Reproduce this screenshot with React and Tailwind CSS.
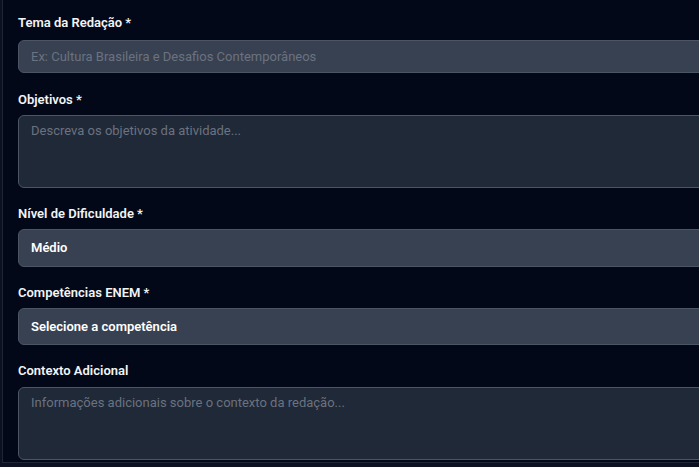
import React from "react";

const font = { fontFamily: "Roboto, 'Liberation Sans', Arial, sans-serif" };

function Label({ children, className = "" }) {
  return (
    <div className={"text-[13px] leading-5 font-semibold text-[#f3f4f6] " + className}>{children}</div>
  );
}

export default function App() {
  return (
    <div className="w-[699px] h-[467px] overflow-hidden bg-[#0b1120] pl-[2px]" style={font}>
      <div className="w-[760px] bg-[#020817] border-l border-b border-[#1e2533] pl-[15px] pr-4 pt-[13px] pb-[2px]">
        <Label className="mb-[7px]">Tema da Redação *</Label>
        <input
          className="block w-full h-[33px] rounded-md border border-[#4b5563] bg-[#374151] px-3 text-[13px] text-white placeholder:text-[#6b7280] outline-none"
          placeholder="Ex: Cultura Brasileira e Desafios Contemporâneos"
        />
        <Label className="mt-[17px] mb-[5px]">Objetivos *</Label>
        <textarea
          className="block w-full h-[73px] resize-none rounded-md border border-[#4b5563] bg-[#1f2937] px-3 pt-[5px] text-[13px] leading-5 text-white placeholder:text-[#6b7280] outline-none"
          placeholder="Descreva os objetivos da atividade..."
        />
        <Label className="mt-4 mb-[5px]">Nível de Dificuldade *</Label>
        <div className="flex items-center w-full h-[38px] rounded-md border border-[#4b5563] bg-[#374151] px-3 text-[13px] font-semibold text-white">
          Médio
        </div>
        <Label className="mt-4 mb-[5px]">Competências ENEM *</Label>
        <div className="flex items-center w-full h-[37px] rounded-md border border-[#4b5563] bg-[#374151] px-3 text-[13px] font-semibold text-white">
          Selecione a competência
        </div>
        <Label className="mt-4 mb-[6px]">Contexto Adicional</Label>
        <textarea
          className="block w-full h-[73px] resize-none rounded-md border border-[#4b5563] bg-[#1f2937] px-3 pt-[5px] text-[13px] leading-5 text-white placeholder:text-[#6b7280] outline-none"
          placeholder="Informações adicionais sobre o contexto da redação..."
        />
      </div>
    </div>
  );
}
